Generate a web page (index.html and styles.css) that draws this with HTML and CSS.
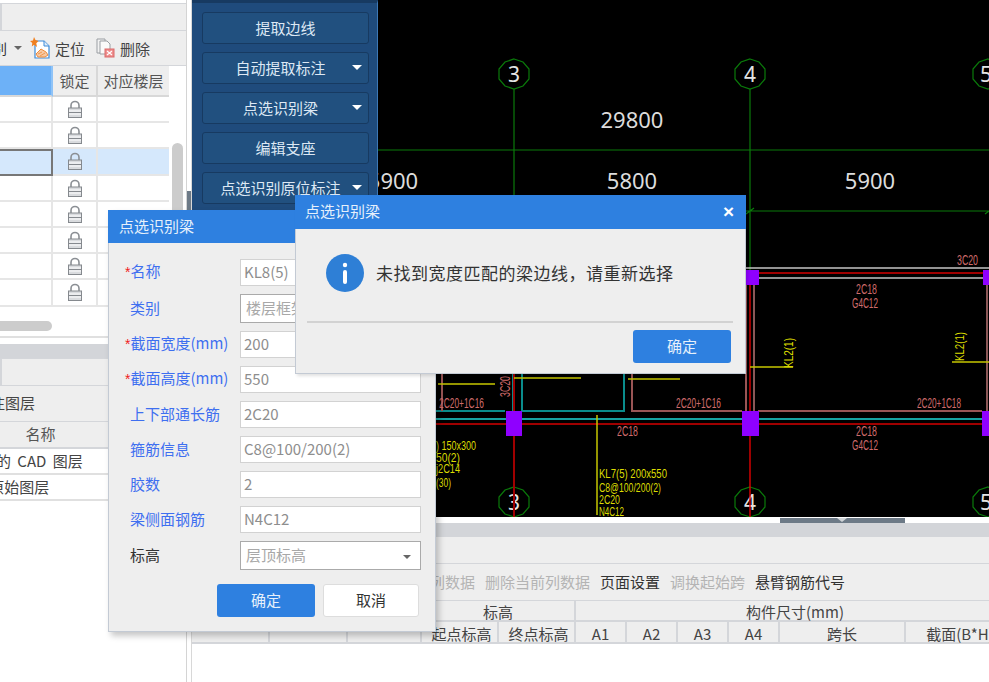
FILE: index.html
```html
<!DOCTYPE html>
<html lang="zh">
<head>
<meta charset="utf-8">
<title>点选识别梁</title>
<link rel="stylesheet" href="styles.css">
</head>
<body>
<svg class="defs" width="0" height="0" aria-hidden="true">
  <symbol id="lock" viewBox="0 0 16 18">
    <path d="M4 9V5.500a4 4 0 0 1 8 0V9" fill="none" stroke="#8b8f94" stroke-width="1.600"/>
    <rect x="1.500" y="8" width="13" height="9.500" fill="#d9dbde" stroke="#85898e"/>
    <path d="M2 11h12M2 14h12" stroke="#fff" stroke-width="1.200"/>
    <path d="M2 12.500h12" stroke="#85898e" stroke-width="1"/>
  </symbol>
</svg>
<div class="app">
  <aside class="left">
    <div class="tabbar"><span class="tabbox"></span></div>
    <div class="toolbar end">
      <span class="clip-text">点选识别</span>
      <span class="caret"></span>
      <svg class="tool-icon locate" width="20" height="22" viewBox="0 0 20 22">
        <path d="M5 4h9l5 5v12H5z" fill="#fff" stroke="#3d8ad8" stroke-width="1.200"/>
        <path d="M14 4v5h5" fill="#dcecfa" stroke="#3d8ad8" stroke-width="1"/>
        <path d="M6 17l5-5 5 3 2 3-3 2H8z" fill="#f7c9a4" stroke="#ee8b3a" stroke-width="1"/>
        <path d="M8 17l4-2M10 19l5-3" stroke="#ee8b3a" stroke-width=".8"/>
        <path d="M4 0l1.500 3 3 1-2.200 2.200L7 10 4 7.800 1.800 9.500 2.300 6 0 4l3-.5z" fill="#f08020"/>
      </svg>
      <span class="tool-label">定位</span>
      <svg class="tool-icon remove" width="19" height="20" viewBox="0 0 19 20">
        <path d="M1 1h8v14H1z" fill="#f2f2f2" stroke="#9a9ea3"/>
        <path d="M4 3h7l3 3v10H4z" fill="#fafafa" stroke="#9a9ea3"/>
        <rect x="9" y="11" width="9" height="8" fill="#ee8c8c" stroke="#d96a6a"/>
        <path d="M11 13l5 4M16 13l-5 4" stroke="#fff" stroke-width="1.200"/>
      </svg>
      <span class="tool-label">删除</span>
    </div>
    <div class="lock-table">
      <div class="cell head active"></div><div class="cell head">锁定</div><div class="cell head">对应楼层</div>
      <div class="cell"></div><div class="cell"><svg class="lock"><use href="#lock"/></svg></div><div class="cell"></div>
      <div class="cell"></div><div class="cell"><svg class="lock"><use href="#lock"/></svg></div><div class="cell"></div>
      <div class="cell current"></div><div class="cell sel"><svg class="lock"><use href="#lock"/></svg></div><div class="cell sel"></div>
      <div class="cell"></div><div class="cell"><svg class="lock"><use href="#lock"/></svg></div><div class="cell"></div>
      <div class="cell"></div><div class="cell"><svg class="lock"><use href="#lock"/></svg></div><div class="cell"></div>
      <div class="cell"></div><div class="cell"><svg class="lock"><use href="#lock"/></svg></div><div class="cell"></div>
      <div class="cell"></div><div class="cell"><svg class="lock"><use href="#lock"/></svg></div><div class="cell"></div>
      <div class="cell"></div><div class="cell"><svg class="lock"><use href="#lock"/></svg></div><div class="cell"></div>
    </div>
    <div class="v-scroll"></div>
    <div class="splitter"></div>
    <div class="h-scroll-track"><div class="h-scroll"></div></div>
    <div class="band"></div>
    <div class="tabbar lower"><span class="tabbox"></span></div>
    <div class="toolbar layer-tools end-layer"><span>显示标注图层</span></div>
    <div class="layer-head">名称</div>
    <div class="layer-row"><span class="name-a">已提取的 CAD 图层</span></div>
    <div class="layer-row"><span class="name-b">CAD 原始图层</span></div>
  </aside>

  <nav class="panel">
    <button class="pbtn">提取边线</button>
    <button class="pbtn drop">自动提取标注</button>
    <button class="pbtn drop">点选识别梁</button>
    <button class="pbtn">编辑支座</button>
    <button class="pbtn drop">点选识别原位标注</button>
  </nav>

  <main class="view">
    <svg class="cad" viewBox="378 0 611 517" width="611" height="517">
      <g class="g">
        <path d="M378 150H989M514 89V375M750 89V270M746 211H989M746 214l8-6M985 214l8-6"/>
        <polygon points="514,59 523,62 529,69 529,79 523,86 514,89 505,86 499,79 499,69 505,62"/>
        <polygon points="750,59 759,62 765,69 765,79 759,86 750,89 741,86 735,79 735,69 741,62"/>
        <polygon points="988,59 997,62 1003,69 1003,79 997,86 988,89 979,86 973,79 973,69 979,62"/>
        <polygon points="514,487 523,490 529,497 529,507 523,514 514,517 505,514 499,507 499,497 505,490"/>
        <polygon points="750,487 759,490 765,497 765,507 759,514 750,517 741,514 735,507 735,497 741,490"/>
        <polygon points="988,487 997,490 1003,497 1003,507 997,514 988,517 979,514 973,507 973,497 979,490"/>
      </g>
      <g class="num">
        <text x="514" y="82">3</text><text x="750" y="82">4</text><text x="986" y="82">5</text>
        <text x="514" y="510">3</text><text x="750" y="510">4</text><text x="986" y="510">5</text>
      </g>
      <g class="dim">
        <text x="632" y="128">29800</text>
        <text x="393" y="189">5900</text>
        <text x="632" y="189">5800</text>
        <text x="870" y="189">5900</text>
      </g>
      <path class="white-line" d="M746 268H989M746 278H989"/>
      <path class="teal" d="M436 411H505M513 374V411M522 374V411H624V374"/>
      <path class="brown" d="M442 374V411M632 374V411H742M746 285V411M758 411H982"/>
      <path class="pink" d="M754 285V411M987 285V411"/>
      <path class="cyan" d="M436 419H989"/>
      <path class="dark-red" d="M436 424H989M746 273H989M514 374V517"/>
      <path class="red" d="M750 270V517"/>
      <g class="col">
        <rect x="506" y="411" width="16" height="25"/>
        <rect x="742" y="411" width="17" height="25"/>
        <rect x="982" y="411" width="7" height="25"/>
        <rect x="746" y="270" width="13" height="15"/>
        <rect x="983" y="270" width="6" height="15"/>
      </g>
      <path class="yellow" d="M438 384H495M514 378H581M628 379H680M597 415V515M750 367H793M952 362H989"/>
      <g class="rebar">
        <text x="439" y="408" textLength="45" lengthAdjust="spacingAndGlyphs">2C20+1C16</text>
        <text x="676" y="408" textLength="45" lengthAdjust="spacingAndGlyphs">2C20+1C16</text>
        <text x="917" y="408" textLength="44" lengthAdjust="spacingAndGlyphs">2C20+1C18</text>
        <text x="617" y="436" textLength="21" lengthAdjust="spacingAndGlyphs">2C18</text>
        <text x="856" y="436" textLength="21" lengthAdjust="spacingAndGlyphs">2C18</text>
        <text x="852" y="450" textLength="26" lengthAdjust="spacingAndGlyphs">G4C12</text>
        <text x="856" y="294" textLength="21" lengthAdjust="spacingAndGlyphs">2C18</text>
        <text x="852" y="308" textLength="26" lengthAdjust="spacingAndGlyphs">G4C12</text>
        <text x="957" y="265" textLength="21" lengthAdjust="spacingAndGlyphs">3C20</text>
        <text transform="translate(510 397) rotate(-90)" textLength="21" lengthAdjust="spacingAndGlyphs">3C20</text>
      </g>
      <g class="note">
        <text x="599" y="478" textLength="68" lengthAdjust="spacingAndGlyphs">KL7(5) 200x550</text>
        <text x="599" y="492" textLength="62" lengthAdjust="spacingAndGlyphs">C8@100/200(2)</text>
        <text x="599" y="504" textLength="21" lengthAdjust="spacingAndGlyphs">2C20</text>
        <text x="599" y="516" textLength="25" lengthAdjust="spacingAndGlyphs">N4C12</text>
        <text x="436" y="450" textLength="40" lengthAdjust="spacingAndGlyphs">) 150x300</text>
        <text x="436" y="462" textLength="24" lengthAdjust="spacingAndGlyphs">50(2)</text>
        <text x="436" y="473" textLength="24" lengthAdjust="spacingAndGlyphs">j2C14</text>
        <text x="436" y="487" textLength="15" lengthAdjust="spacingAndGlyphs">(30)</text>
        <text transform="translate(793 368) rotate(-90)" textLength="30" lengthAdjust="spacingAndGlyphs">KL2(1)</text>
        <text transform="translate(964 361) rotate(-90)" textLength="29" lengthAdjust="spacingAndGlyphs">KL2(1)</text>
      </g>
    </svg>
    <div class="view-foot"><div class="handle"><span class="handle-tip"></span></div></div>
  </main>

  <section class="bottom">
    <div class="band"></div>
    <div class="tabbar bottom-tab"></div>
    <div class="bottom-tools">
      <span class="off">删除当前列数据</span>
      <span class="off">删除当前列数据</span>
      <span>页面设置</span>
      <span class="off">调换起始跨</span>
      <span>悬臂钢筋代号</span>
    </div>
    <div class="span-table">
      <div class="th"></div><div class="th"></div><div class="th"></div>
      <div class="th s2">标高</div><div class="th s6">构件尺寸(mm)</div>
      <div class="th"></div><div class="th"></div><div class="th"></div>
      <div class="th nudge">起点标高</div><div class="th nudge">终点标高</div>
      <div class="th">A1</div><div class="th">A2</div><div class="th">A3</div><div class="th">A4</div>
      <div class="th">跨长</div><div class="th">截面(B*H)</div>
    </div>
  </section>
</div>

<div class="dialog beam">
  <header class="title">点选识别梁</header>
  <div class="form">
    <label class="lab"><i>*</i>名称</label><div class="field">KL8(5)</div>
    <label class="lab">类别</label><div class="field pick">楼层框架梁</div>
    <label class="lab"><i>*</i>截面宽度(mm)</label><div class="field">200</div>
    <label class="lab"><i>*</i>截面高度(mm)</label><div class="field">550</div>
    <label class="lab">上下部通长筋</label><div class="field">2C20</div>
    <label class="lab">箍筋信息</label><div class="field">C8@100/200(2)</div>
    <label class="lab">胶数</label><div class="field">2</div>
    <label class="lab">梁侧面钢筋</label><div class="field">N4C12</div>
    <label class="lab plain">标高</label><div class="field pick drop-field">层顶标高<span class="caret"></span></div>
  </div>
  <div class="actions">
    <button class="btn primary">确定</button>
    <button class="btn ghost">取消</button>
  </div>
</div>

<div class="dialog alert">
  <header class="title">点选识别梁<span class="close">×</span></header>
  <div class="message">
    <svg class="info" width="38" height="38" viewBox="0 0 38 38">
      <circle cx="19" cy="19" r="19" fill="#2e7fd6"/>
      <circle cx="19" cy="11" r="2.200" fill="#fff"/>
      <rect x="17" y="16" width="4" height="14" rx="2" fill="#fff"/>
    </svg>
    <span>未找到宽度匹配的梁边线，请重新选择</span>
  </div>
  <div class="alert-foot"><button class="btn primary">确定</button></div>
</div>
</body>
</html>
```

FILE: styles.css
```css
* { box-sizing: border-box; }
html, body { margin: 0; height: 100%; overflow: hidden; }
body {
  position: relative;
  width: 989px;
  height: 682px;
  background: #fff;
  color: #333;
  font: 14px/1.2 "Noto Sans CJK SC", "Noto Sans", sans-serif;
}
.defs { position: absolute; }
button { font: inherit; cursor: pointer; }

.app {
  display: grid;
  grid-template-columns: 192px 186px 611px;
  grid-template-rows: 523px 159px;
  height: 682px;
}

/* left column */
.left {
  grid-row: 1 / 3;
  position: relative;
  width: 192px;
  height: 682px;
  padding-right: 5px;
  padding-top: 3px;
  overflow: hidden;
  border-right: 1px solid #d8d8d8;
  background: linear-gradient(#d4d4d4, #d4d4d4) 186px 0 / 1px 100% no-repeat #fff;
}
.tabbar {
  height: 28px;
  background: #eee;
  border-top: 1px solid #d4d6da;
  border-bottom: 1px solid #d4d6da;
}
.tabbox { display: block; width: 2px; height: 100%; background: #d4d6da; }
.toolbar {
  display: flex;
  align-items: center;
  height: 35px;
  background: #eee;
  border-bottom: 1px solid #d4d6da;
  overflow: hidden;
  white-space: nowrap;
}
.clip-text { margin-left: -49px; font-size: 14px; }
.toolbar .caret { margin-left: 7px; margin-right: 8px; }
.caret {
  display: inline-block;
  width: 0;
  height: 0;
  border: 4px solid transparent;
  border-top: 4px solid #666;
  border-bottom: 0;
}
.tool-icon { flex: none; }
.tool-label { font-size: 15px; line-height: 1; color: #444; }
.locate { margin: 0 5px 0 0; }
.remove { margin: 0 5px 0 11px; }

.lock-table {
  display: grid;
  grid-template-columns: 53px 45px 71px;
  grid-template-rows: 31px repeat(8, 26.200px);
  width: 169px;
}
.cell {
  display: flex;
  align-items: center;
  justify-content: center;
  border-right: 2px solid #e6e6e6;
  border-bottom: 2px solid #e6e6e6;
  font-size: 15px;
  color: #555;
}
.cell:nth-child(3n) { border-right: 0; }
.head { background: #eee; border-bottom-color: #d8d8d8; border-right-color: #d8d8d8; }
.active { background: #6db1f7; border-right-color: #8fc3f7; }
.sel { background: #d5e8fc; }
.current { background: #d5e8fc; border: 2px solid #777; border-left: 0; }
.lock { width: 16px; height: 18px; }

.v-scroll {
  position: absolute;
  left: 172px;
  top: 143px;
  width: 11px;
  height: 190px;
  border-radius: 6px;
  background: #ccc;
}
.splitter {
  position: absolute;
  left: 187px;
  top: 191px;
  width: 5px;
  height: 130px;
  background: #6d7a87;
}
.h-scroll-track {
  height: 31px;
  padding-top: 14px;
  border-bottom: 2px solid #e0e0e0;
}
.h-scroll { width: 52px; height: 10px; border-radius: 0 6px 6px 0; background: #ccc; }
.band { height: 14px; margin-top: 6px; background: #d3d5d9; }
.bottom .band { margin-top: 0; }
.layer-tools { height: 36px; }
.end-layer span { margin-left: -55px; font-size: 15px; color: #444; }
.layer-head {
  display: flex;
  align-items: center;
  justify-content: center;
  height: 27px;
  padding-right: 105px;
  background: #eee;
  border-bottom: 2px solid #d4d6da;
  font-size: 15px;
  color: #555;
}
.layer-row {
  height: 26px;
  display: flex;
  align-items: center;
  overflow: hidden;
  white-space: nowrap;
  word-spacing: 3px;
  border-bottom: 2px solid #e0e0e0;
  font-size: 15px;
  color: #444;
}
.name-a { margin-left: -49px; }
.name-b { margin-left: -46px; }

/* blue command panel */
.panel {
  display: flex;
  flex-direction: column;
  gap: 8px;
  padding: 9px 8px 0 10px;
  background: #1f4b7c;
  border-top: 3px solid #173a61;
  border-right: 1px solid #3d78b5;
}
.pbtn {
  position: relative;
  height: 32px;
  padding: 0;
  color: #dde8f4;
  font-size: 15px;
  background: #21507f;
  border: 1px solid #173a61;
  border-radius: 3px;
}
.drop { padding-right: 10px; }
.drop::after {
  content: "";
  position: absolute;
  right: 6px;
  top: 12px;
  border: 5px solid transparent;
  border-top: 5px solid #fff;
  border-bottom: 0;
}

/* drawing */
.view { display: flex; flex-direction: column; background: #fff; overflow: hidden; }
.cad { display: block; flex: none; background: #000; }
.cad path, .cad polygon { fill: none; }
.g path, .g polygon { stroke: #0a7a0a; stroke-width: 1.200; }
.num text { fill: #e4e4e4; font: 21px "Noto Sans", sans-serif; text-anchor: middle; }
.dim text { fill: #dcdcdc; font: 22px "Noto Sans", sans-serif; text-anchor: middle; }
.white-line { stroke: #c4c4c4; stroke-width: 1.500; }
.teal { stroke: #0a8c8c; stroke-width: 2; }
.brown { stroke: #9a5555; stroke-width: 2; }
.pink { stroke: #e89090; stroke-width: 1.200; }
.cyan { stroke: #1fd8d8; stroke-width: 1.500; }
.dark-red { stroke: #a00000; stroke-width: 2; }
.red { stroke: #e00000; stroke-width: 1.400; }
.col rect { fill: #8f00ff; }
.yellow { stroke: #c6c600; stroke-width: 1.500; }
.rebar text { fill: #cf6b6b; font: 14px "Liberation Sans", sans-serif; }
.note text { fill: #dcdc00; font: 13px "Liberation Sans", sans-serif; }
.view-foot { flex: 1; display: flex; justify-content: flex-start; padding-left: 402px; padding-top: 1px; }
.handle { position: relative; width: 125px; height: 5px; background: #6d7a87; }
.handle-tip {
  position: absolute;
  left: 57px;
  top: 0;
  border: 5px solid transparent;
  border-top: 4px solid #d0d4d8;
  border-bottom: 0;
}

/* bottom panel */
.bottom { grid-column: 2 / 4; overflow: hidden; }
.bottom-tab { height: 27px; border-top: 0; }
.bottom-tools {
  display: flex;
  align-items: center;
  gap: 10px;
  height: 36px;
  width: 100%;
  padding-left: 178px;
  background: #eee;
  font-size: 15px;
  color: #333;
  white-space: nowrap;
  overflow: hidden;
}
.off { color: #b4b4b4; }
.span-table {
  display: grid;
  grid-template-columns: 78px 78px 74px 77px 77px 51px 51px 51px 51px 126px 110px;
  grid-template-rows: 21px 22px;
  width: 844px;
  height: 44px;
  background: #eee;
  border-top: 1px solid #d4d6da;
}
.th {
  display: flex;
  align-items: center;
  justify-content: center;
  padding-top: 2px;
  border-right: 2px solid #d4d6da;
  border-bottom: 2px solid #d4d6da;
  font-size: 15px;
  line-height: 1;
  color: #444;
  white-space: nowrap;
}
.nudge { padding-left: 4px; }
.s2 { grid-column: span 2; }
.s6 { grid-column: span 6; }

/* dialogs */
.dialog {
  position: absolute;
  background: #eee;
  border: 1px solid #c3cad4;
  border-top: 0;
  box-shadow: 3px 4px 6px rgba(0, 0, 0, .22);
}
.title {
  display: flex;
  align-items: center;
  justify-content: space-between;
  height: 33px;
  margin: 0 -1px;
  padding: 0 11px 2px;
  background: #2e80e0;
  color: #e6f0fb;
  font-size: 15px;
}
.beam { left: 108px; top: 210px; width: 328px; height: 422px; }
.alert { left: 295px; top: 195px; width: 451px; height: 179px; box-shadow: 2px 2px 3px rgba(0, 0, 0, .12); }
.alert .title { height: 34px; padding: 0 10px 3px; }
.close {
  margin: 1px 2px 0 0;
  font: bold 19px/1 "Liberation Sans", sans-serif;
  color: #fff;
}
.form {
  display: grid;
  grid-template-columns: 131px 181px;
  gap: 8px 0;
  align-items: center;
  padding-top: 16px;
}
.lab {
  padding: 0 0 3px 21px;
  font-size: 15px;
  color: #3e6ff0;
  white-space: nowrap;
  line-height: 1;
}
.lab i {
  margin: 0 0 0 -5px;
  font: 14px/1 "Liberation Sans", sans-serif;
  color: #f01c1c;
}
.plain { color: #333; }
.field {
  position: relative;
  height: 27px;
  padding: 0 3px;
  line-height: 24px;
  background: #fff;
  border: 1px solid #d2d2d2;
  font-size: 15px;
  color: #8e8e8e;
  white-space: nowrap;
  overflow: hidden;
}
.pick { height: 29px; line-height: 26px; padding-left: 5px; border: 1px solid #aaa; color: #a8a8a8; }
.drop-field .caret { position: absolute; right: 9px; top: 13px; }
.actions {
  display: flex;
  gap: 8px;
  padding: 14px 0 0 108px;
}
.btn {
  width: 98px;
  height: 33px;
  padding: 0 0 2px;
  font-size: 15px;
  border-radius: 3px;
  border: 1px solid transparent;
}
.primary { background: #2e80e0; color: #e6f0fb; }
.ghost { width: 96px; background: #fff; border-color: #ddd; color: #333; }
.message {
  display: flex;
  align-items: center;
  gap: 12px;
  height: 91px;
  padding: 0 0 0 30px;
  font-size: 17px;
  letter-spacing: .5px;
  color: #333;
}
.message span, .message .info { margin-top: -3px; }
.alert-foot {
  display: flex;
  justify-content: flex-end;
  height: 53px;
  margin: 1px 12px 0 11px;
  padding: 7px 2px 0 0;
  border-top: 2px solid #d2d2d2;
}
```
